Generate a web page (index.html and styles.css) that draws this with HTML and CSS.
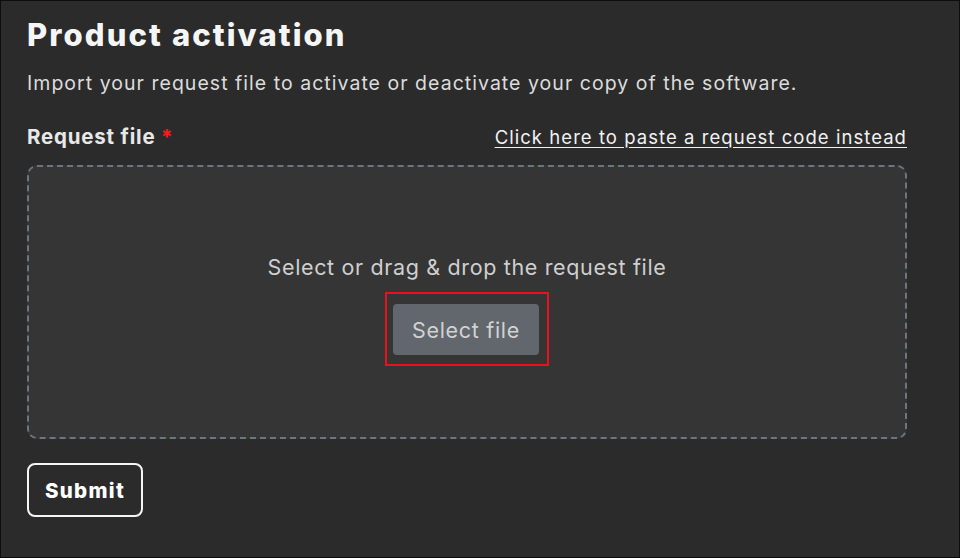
FILE: index.html
```html
<!DOCTYPE html>
<html lang="en">
<head>
    <meta charset="UTF-8">
    <meta name="viewport" content="width=device-width, initial-scale=1.0">
    <title>Product activation</title>
    <link rel="stylesheet" href="styles.css">
</head>
<body>
    <div class="page">
        <h1>Product activation</h1>
        <p class="intro">Import your request file to activate or deactivate your copy of the software.</p>

        <form class="activation-form">
            <div class="field-head">
                <label for="request-file">Request file <span class="required">*</span></label>
                <a href="#" class="paste-link">Click here to paste a request code instead</a>
            </div>

            <div class="dropzone">
                <p class="drop-text">Select or drag &amp; drop the request file</p>
                <div class="highlight">
                    <button type="button" class="select-btn">Select file</button>
                </div>
                <input type="file" id="request-file" hidden>
            </div>

            <button type="submit" class="submit-btn">Submit</button>
        </form>
    </div>
</body>
</html>
```

FILE: styles.css
```css
html, body {
    margin: 0;
    height: 100%;
}
body {
    background-color: #2b2b2b;
    color: #f2f2f2;
    font-family: Inter, "Open Sans", sans-serif;
    box-sizing: border-box;
    border: 1px solid #0d0d0d;
}
.page {
    padding: 14px 52px 0 26px;
}
h1 {
    margin: 0;
    font-size: 31px;
    font-weight: 800;
    line-height: 40px;
    letter-spacing: 2.1px;
    color: #f5f5f5;
}
.intro {
    margin: 14px 0 0;
    font-size: 19.5px;
    line-height: 28px;
    letter-spacing: 1.03px;
    color: #dcdcdc;
}
.field-head {
    display: flex;
    justify-content: space-between;
    align-items: baseline;
    margin-top: 27px;
}
.field-head label {
    font-size: 20.5px;
    font-weight: 700;
    letter-spacing: 0.8px;
    color: #e8e8e8;
}
.required {
    color: #ff1a1a;
}
.paste-link {
    font-size: 18.5px;
    letter-spacing: 1.05px;
    color: #f2f2f2;
    text-decoration: underline;
    text-underline-offset: 3px;
}
.dropzone {
    margin-top: 16px;
    height: 274px;
    box-sizing: border-box;
    border: 2px dashed #6c7680;
    border-radius: 10px;
    background-color: #353535;
    display: flex;
    flex-direction: column;
    align-items: center;
    justify-content: center;
    padding-top: 16px;
}
.drop-text {
    margin: 0;
    font-size: 21.5px;
    letter-spacing: 0.65px;
    color: #cfcfcf;
}
.highlight {
    margin-top: 12px;
    border: 2px solid #e8121a;
    padding: 10px 8px 9px 6px;
}
.select-btn {
    display: block;
    width: 146px;
    height: 51px;
    background-color: #62676e;
    color: #d2d2d2;
    border: none;
    border-radius: 4px;
    font-family: inherit;
    font-size: 21.5px;
    letter-spacing: 0.7px;
}
.submit-btn {
    margin-top: 24px;
    width: 116px;
    height: 54px;
    background: transparent;
    color: #fff;
    border: 2px solid #f5f5f5;
    border-radius: 8px;
    font-family: inherit;
    font-size: 20.5px;
    font-weight: 800;
    letter-spacing: 1.3px;
}
```
